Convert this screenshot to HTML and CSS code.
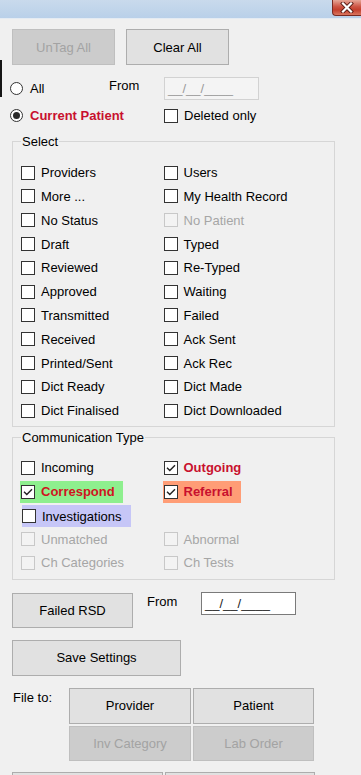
FILE: index.html
```html
<!DOCTYPE html>
<html>
<head>
<meta charset="utf-8">
<link rel="stylesheet" href="styles.css">
</head>
<body>
<div class="titlebar">
  <div class="close">
    <svg width="14" height="11" viewBox="0 0 14 11"><path d="M3 1.5 L11 9.5 M11 1.5 L3 9.5" stroke="#5a1d16" stroke-width="4" stroke-linecap="square"/><path d="M3 1.5 L11 9.5 M11 1.5 L3 9.5" stroke="#ffffff" stroke-width="2.2" stroke-linecap="square"/></svg>
  </div>
</div>
<div class="edge"></div>
<div class="content">
  <div class="toprow">
    <div class="btn dis">UnTag All</div>
    <div class="btn">Clear All</div>
  </div>

  <div class="r1">
    <label class="opt col-all"><span class="radio"></span><span>All</span></label>
    <span class="from">From</span>
    <div class="date dis">__/__/____</div>
  </div>
  <div class="r2">
    <label class="opt col-cur crim"><span class="radio on"></span><span>Current Patient</span></label>
    <label class="opt"><span class="cb"></span><span>Deleted only</span></label>
  </div>

  <fieldset class="group sel">
    <legend>Select</legend>
    <div class="grid">
      <label class="opt"><span class="cb"></span><span>Providers</span></label>
      <label class="opt"><span class="cb"></span><span>Users</span></label>
      <label class="opt"><span class="cb"></span><span>More ...</span></label>
      <label class="opt"><span class="cb"></span><span>My Health Record</span></label>
      <label class="opt"><span class="cb"></span><span>No Status</span></label>
      <label class="opt off"><span class="cb"></span><span>No Patient</span></label>
      <label class="opt"><span class="cb"></span><span>Draft</span></label>
      <label class="opt"><span class="cb"></span><span>Typed</span></label>
      <label class="opt"><span class="cb"></span><span>Reviewed</span></label>
      <label class="opt"><span class="cb"></span><span>Re-Typed</span></label>
      <label class="opt"><span class="cb"></span><span>Approved</span></label>
      <label class="opt"><span class="cb"></span><span>Waiting</span></label>
      <label class="opt"><span class="cb"></span><span>Transmitted</span></label>
      <label class="opt"><span class="cb"></span><span>Failed</span></label>
      <label class="opt"><span class="cb"></span><span>Received</span></label>
      <label class="opt"><span class="cb"></span><span>Ack Sent</span></label>
      <label class="opt"><span class="cb"></span><span>Printed/Sent</span></label>
      <label class="opt"><span class="cb"></span><span>Ack Rec</span></label>
      <label class="opt"><span class="cb"></span><span>Dict Ready</span></label>
      <label class="opt"><span class="cb"></span><span>Dict Made</span></label>
      <label class="opt"><span class="cb"></span><span>Dict Finalised</span></label>
      <label class="opt"><span class="cb"></span><span>Dict Downloaded</span></label>
    </div>
  </fieldset>

  <fieldset class="group comm">
    <legend>Communication Type</legend>
    <div class="grid">
      <label class="opt"><span class="cb"></span><span>Incoming</span></label>
      <label class="opt crim"><span class="cb"><svg class="tick" width="12" height="12" viewBox="0 0 12 12"><path d="M2 5.8 L4.8 8.6 L10 3.2" fill="none" stroke="#222" stroke-width="1.4"/></svg></span><span>Outgoing</span></label>
      <div class="cell"><label class="opt crim hl hl-green"><span class="cb"><svg class="tick" width="12" height="12" viewBox="0 0 12 12"><path d="M2 5.8 L4.8 8.6 L10 3.2" fill="none" stroke="#222" stroke-width="1.4"/></svg></span><span>Correspond</span></label></div>
      <div class="cell"><label class="opt crim hl hl-orange"><span class="cb"><svg class="tick" width="12" height="12" viewBox="0 0 12 12"><path d="M2 5.8 L4.8 8.6 L10 3.2" fill="none" stroke="#222" stroke-width="1.4"/></svg></span><span>Referral</span></label></div>
      <div class="cell"><label class="opt hl hl-blue"><span class="cb"></span><span>Investigations</span></label></div>
      <div class="cell"></div>
      <label class="opt off"><span class="cb"></span><span>Unmatched</span></label>
      <label class="opt off"><span class="cb"></span><span>Abnormal</span></label>
      <label class="opt off"><span class="cb"></span><span>Ch Categories</span></label>
      <label class="opt off"><span class="cb"></span><span>Ch Tests</span></label>
    </div>
  </fieldset>

  <div class="rsdrow">
    <div class="btn rsd">Failed RSD</div>
    <span class="from from2">From</span>
    <div class="date">__/__/____</div>
  </div>

  <div class="btn save">Save Settings</div>

  <div class="filerow">
    <span class="fileto">File to:</span>
    <div class="filegrid">
      <div class="btn">Provider</div>
      <div class="btn">Patient</div>
      <div class="btn dis">Inv Category</div>
      <div class="btn dis">Lab Order</div>
    </div>
  </div>

  <div class="bottomrow">
    <div class="btn b1"></div>
    <div class="btn b2"></div>
  </div>
</div>
</body>
</html>
```

FILE: styles.css
```css
* { box-sizing: border-box; }
html, body { margin: 0; padding: 0; }
body {
  background: #f0f0f0;
  font-family: "Liberation Sans", Arial, sans-serif;
  font-size: 13px;
  color: #000;
  width: 361px;
  height: 775px;
  overflow: hidden;
  position: relative;
}

.titlebar {
  height: 19px;
  background: linear-gradient(#c9daec, #b9d0e9);
  display: flex;
  justify-content: flex-end;
  border-bottom: 1px solid #e4ebf3;
}
.close {
  width: 29px;
  height: 16px;
  border-left: 1px solid #7a2a22;
  border-bottom: 1px solid #7a2a22;
  border-bottom-left-radius: 4px;
  background: linear-gradient(#e6a697, #cd5342 45%, #c33f2d 65%, #d9765f);
  display: flex;
  align-items: center;
  justify-content: center;
}

.edge {
  position: absolute;
  left: 0;
  top: 60px;
  width: 2px;
  height: 37px;
  background: #151515;
}

.btn {
  display: flex;
  align-items: center;
  justify-content: center;
  background: #e1e1e1;
  border: 1px solid #adadad;
  color: #000;
  white-space: nowrap;
}
.btn.dis {
  background: #cccccc;
  border-color: #bfbfbf;
  color: #a3a3a3;
}

.toprow {
  display: flex;
  gap: 11px;
  margin: 10px 0 0 12px;
}
.toprow .btn { width: 103px; height: 36px; }

.opt {
  display: flex;
  align-items: center;
  gap: 6px;
  white-space: nowrap;
}
.opt.off { color: #a6a6a6; }
.crim { color: #c8102e; font-weight: bold; }

.radio {
  width: 13px;
  height: 13px;
  border: 1px solid #333;
  border-radius: 50%;
  background: #fff;
  display: flex;
  align-items: center;
  justify-content: center;
  margin-right: 1px;
}
.radio.on::after {
  content: "";
  width: 7px;
  height: 7px;
  border-radius: 50%;
  background: #2a2a2a;
}

.cb {
  width: 14px;
  height: 14px;
  border: 1px solid #333;
  background: #fff;
  flex: none;
  display: flex;
  align-items: center;
  justify-content: center;
}
.off .cb {
  border-color: #c8c8c8;
  background: #f3f3f3;
}

.r1 {
  display: flex;
  align-items: center;
  height: 23px;
  margin: 12px 0 0 10px;
}
.col-all { width: 99px; }
.from {
  width: 55px;
  align-self: flex-start;
  padding-top: 1px;
  line-height: 15px;
}
.date {
  width: 95px;
  height: 23px;
  border: 1px solid #7a7a7a;
  background: #fff;
  color: #222;
  padding-left: 3px;
  display: flex;
  align-items: center;
}
.date.dis {
  border-color: #d2d2d2;
  background: #f4f4f4;
  color: #9a9a9a;
}

.r2 {
  display: flex;
  align-items: center;
  height: 15px;
  margin: 8px 0 0 10px;
}
.col-cur { width: 154px; }

.group {
  width: 323px;
  margin: 11px 0 0 12px;
  border: 1px solid #d6d6d6;
  padding: 11.8px 0 3px 8px;
  min-width: 0;
}
.group legend {
  padding: 0 1px;
  margin: 0;
  line-height: 15px;
}
.group.comm {
  margin-top: 3.5px;
  padding: 10.8px 0 4px 8px;
}
.grid {
  display: grid;
  grid-template-columns: 142.5px 1fr;
  grid-auto-rows: 23.8px;
  align-items: center;
}
.cell { display: flex; align-items: center; height: 100%; }

.hl {
  height: 22px;
  align-self: center;
}
.hl-green {
  background: #8eef8e;
  margin-left: -1px;
  padding-left: 1px;
  padding-right: 8px;
  color: #d0141e;
}
.hl-orange {
  background: #ff9d76;
  margin-left: -1px;
  padding-left: 1px;
  padding-right: 8px;
}
.hl-blue {
  background: #c6c6f7;
  margin-left: 1px;
  padding-right: 9px;
  margin-top: 2px;
}

.rsdrow {
  display: flex;
  align-items: flex-start;
  margin: 13px 0 0 12px;
}
.rsd { width: 121px; height: 35px; }
.from2 {
  margin-left: 14px;
  width: 54px;
  padding-top: 1px;
}
.rsdrow .date { margin-top: -1px; }

.save {
  width: 169px;
  height: 36px;
  margin: 12px 0 0 12px;
}

.filerow {
  display: flex;
  align-items: flex-start;
  margin: 12px 0 0 13px;
}
.fileto {
  width: 56px;
  padding-top: 2px;
  line-height: 15px;
}
.filegrid {
  display: grid;
  grid-template-columns: 122px 121px;
  grid-template-rows: 36px 35px;
  gap: 2px;
}

.bottomrow {
  display: flex;
  gap: 2px;
  margin: 11px 0 0 12px;
}
.b1 { width: 151px; height: 36px; }
.b2 { width: 150px; height: 36px; }
```
